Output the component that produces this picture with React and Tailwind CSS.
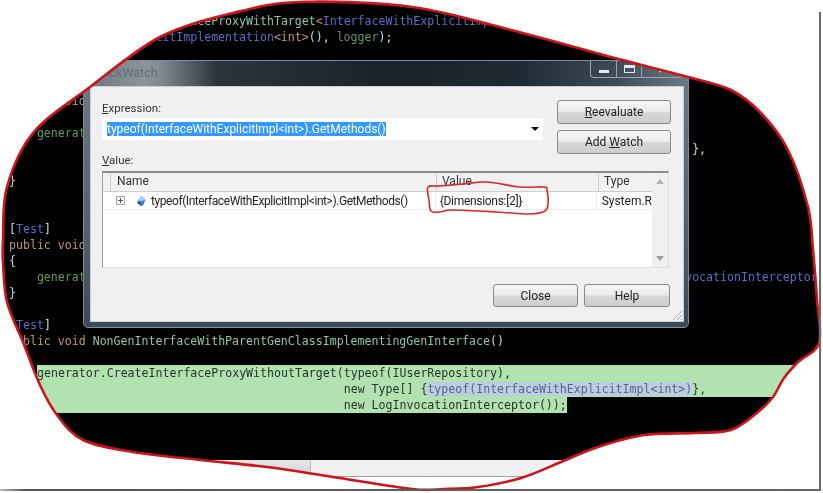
import React from "react";

const blob = [[300,2],[412,7],[511,30],[611,57],[688,77],[731,90],[761,113],[788,150],[808,207],[813,250],[817,300],[819,343],[798,362],[784,378],[773,397],[758,412],[731,430],[694,433],[644,435],[598,447],[561,462],[521,478],[478,487],[444,489],[412,489],[333,477],[267,467],[200,460],[133,452],[83,440],[57,415],[40,385],[23,342],[7,302],[3,262],[3,240],[7,187],[33,133],[90,87],[160,37],[233,13]];
const scribble = [[428,187],[440,186],[463,184],[487,182],[520,187],[544,187],[547,190],[548,204],[545,211],[530,214],[497,212],[453,210],[440,212],[431,211],[429,200]];

function smooth(p) {
  const n = p.length;
  let d = `M${p[0][0]} ${p[0][1]}`;
  for (let i = 0; i < n; i++) {
    const a = p[(i - 1 + n) % n], b = p[i], c = p[(i + 1) % n], e = p[(i + 2) % n];
    d += `C${(b[0] + (c[0] - a[0]) / 6).toFixed(1)} ${(b[1] + (c[1] - a[1]) / 6).toFixed(1)} ${(c[0] - (e[0] - b[0]) / 6).toFixed(1)} ${(c[1] - (e[1] - b[1]) / 6).toFixed(1)} ${c[0]} ${c[1]}`;
  }
  return d + "Z";
}

const sp = (n) => " ".repeat(n);
const W = "text-[#d8d8d8]";
const T = "text-[#8cc7ad]";
const B = "text-[#6469c4]";
const K = "text-[#b99a7c]";
const G = "text-[#5f9a62]";

function L({ children }) {
  return <div className="h-4 whitespace-pre">{children || " "}</div>;
}

function Editor() {
  return (
    <div className="h-[460px] overflow-hidden bg-black pt-[13px] pl-[9px] text-[11.58px] leading-4 [font-family:'DejaVu_Sans_Mono',monospace]">
      <L><span className={G}>{sp(4)}generator.</span><span className={T}>CreateInterfaceProxyWithTarget</span><span className={K}>&lt;</span><span className={B}>InterfaceWithExplicitImpl</span><span className={K}>&lt;int&gt;&gt;</span><span className={W}>(</span></L>
      <L><span className={B}>{sp(16)}ExplicitImplementation</span><span className={K}>&lt;int&gt;</span><span className={W}>(), </span><span className={G}>logger</span><span className={W}>);</span></L>
      <L /><L /><L />
      <L><span className={K}>public void</span></L>
      <L><span className={W}>{"{"}</span></L>
      <L><span className={G}>{sp(4)}generator</span></L>
      <L><span className={W}>{sp(98)}{"},"}</span></L>
      <L />
      <L><span className={W}>{"}"}</span></L>
      <L /><L />
      <L><span className={W}>[</span><span className={B}>Test</span><span className={W}>]</span></L>
      <L><span className={K}>public void</span></L>
      <L><span className={W}>{"{"}</span></L>
      <L><span className={G}>{sp(4)}generator</span><span className={B}>{sp(79)}LogInvocationInterceptor</span></L>
      <L><span className={W}>{"}"}</span></L>
      <L />
      <L><span className={W}>[</span><span className={B}>Test</span><span className={W}>]</span></L>
      <L><span className={K}>public void </span><span className={T}>NonGenInterfaceWithParentGenClassImplementingGenInterface</span><span className={W}>()</span></L>
      <L />
      <div className="ml-[28px] h-4 whitespace-pre bg-[#b2e2b0] text-[#26352a]">generator.CreateInterfaceProxyWithoutTarget(typeof(IUserRepository),</div>
      <div className="ml-[28px] h-4 whitespace-pre bg-[#b2e2b0] text-[#26352a]">{sp(44)}new Type[] {"{"}<span className="bg-[#bccde0] text-[#55648c]">typeof(InterfaceWithExplicitImpl&lt;int&gt;)</span>{"},"}</div>
      <div className="ml-[28px] h-4 w-fit whitespace-pre bg-[#b2e2b0] text-[#26352a]">{sp(44)}new LogInvocationInterceptor());</div>
    </div>
  );
}

function Btn({ className, children }) {
  return (
    <div className={"flex items-center justify-center rounded-[3px] border border-[#8a8a8a] bg-[linear-gradient(180deg,#f6f6f6_0%,#ececec_45%,#d6d6d6_55%,#cdcdcd_100%)] text-[12px] text-[#222] " + className}>
      {children}
    </div>
  );
}

function TitleBar() {
  return (
    <div className="flex h-[25px] shrink-0 items-start justify-between rounded-t-[5px] bg-[linear-gradient(90deg,#6d7780_0%,#8d959b_10%,#7f888f_13%,#2c343a_22%,#1b2228_50%,#1e2a33_72%,#3c4b57_88%,#6b7a85_100%)] pl-[7px] pr-[5px]">
      <span className="pt-[3px] text-[12.5px] leading-[18px] text-[#666d72]">QuickWatch</span>
      <div className="flex h-[17px] rounded-b-[4px] border border-t-0 border-[#9aa6ae]">
        <div className="flex w-[26px] items-center justify-center border-r border-[#9aa6ae]"><div className="mt-[5px] h-[3px] w-[10px] bg-[#e4e8ea]" /></div>
        <div className="flex w-[25px] items-center justify-center border-r border-[#9aa6ae]"><div className="h-[8px] w-[11px] border border-t-[3px] border-[#e4e8ea]" /></div>
        <div className="flex w-[40px] items-center justify-center text-[11px] font-bold leading-none text-[#e8eaec]">✕</div>
      </div>
    </div>
  );
}

function ListBox() {
  return (
    <div className="mt-[3px] flex h-[97px] border-t-2 border-l border-b border-r border-t-[#8c8c8c] border-l-[#a0a0a0] border-b-[#dedede] border-r-[#dedede] bg-white">
      <div className="flex min-w-0 flex-1 flex-col">
        <div className="flex h-[19px] border-b border-[#cfcfcf] bg-[#f1f1f1] text-[12px] leading-[17px] text-[#333]">
          <div className="w-[8px] border-r border-[#d0d0d0]" />
          <div className="w-[326px] border-r border-[#d0d0d0] pl-[6px]">Name</div>
          <div className="w-[162px] border-r border-[#d0d0d0] pl-[5px]">Value</div>
          <div className="flex-1 pl-[5px]">Type</div>
        </div>
        <div className="flex h-[18px] items-center border-b border-[#ececec] text-[12px] text-[#222]">
          <div className="flex w-[335px] items-center border-r border-[#ececec] pl-[13px]">
            <svg width="9" height="9" viewBox="0 0 9 9" className="shrink-0"><rect x="0.5" y="0.5" width="8" height="8" fill="#f4f4f4" stroke="#a8a8a8" /><path d="M2 4.5H7M4.5 2V7" stroke="#555" /></svg>
            <svg width="12" height="12" viewBox="0 0 12 12" className="ml-[10px] shrink-0"><path d="M6 1L10.5 4.5L8 10.5L6 11L2 7.5Z" fill="#3f78c8" /><path d="M6 1L10.5 4.5L6 6.5L3 5Z" fill="#a9cdf0" /><path d="M2 7.5L6 11L5 7Z" fill="#1f4f96" /></svg>
            <span className="ml-[4px] whitespace-nowrap tracking-[-0.43px]">typeof(InterfaceWithExplicitImpl&lt;int&gt;).GetMethods()</span>
          </div>
          <div className="w-[162px] border-r border-[#ececec] pl-[4px] tracking-[-0.3px]">{"{Dimensions:[2]}"}</div>
          <div className="flex-1 whitespace-nowrap pl-[5px]">System.R</div>
        </div>
      </div>
      <div className="flex w-[16px] shrink-0 flex-col items-center justify-between bg-[#f0f0f0] pt-[6px] pb-[6px]">
        <svg width="8" height="5" viewBox="0 0 8 5"><path d="M4 0L8 5H0Z" fill="#b0b0b0" /></svg>
        <svg width="8" height="5" viewBox="0 0 8 5"><path d="M4 5L8 0H0Z" fill="#9a9a9a" /></svg>
      </div>
    </div>
  );
}

function Dialog() {
  return (
    <div className="absolute left-[83px] top-[60px] flex h-[268px] w-[606px] flex-col rounded-[5px] border border-[#7f8d98] bg-[linear-gradient(180deg,#6f7b85_0%,#55626d_60%,#3b4a58_100%)]">
      <TitleBar />
      <div className="relative mb-[5px] ml-[6px] mr-[4px] flex flex-1 flex-col border border-[#c8d0d6] bg-[#f0f0f0] pt-[13px] pl-[11px] pr-[14px] text-[11.5px] leading-4 text-[#333]">
        <div className="flex justify-between">
          <div className="flex w-[441px] flex-col">
            <div className="h-4"><span className="underline">E</span>xpression:</div>
            <div className="mt-[2px] flex h-[22px] items-center justify-between bg-white pl-[5px] pr-[4px] text-[12px]">
              <span className="whitespace-nowrap bg-[#3399ff] leading-[14px] text-white">typeof(InterfaceWithExplicitImpl&lt;int&gt;).GetMethods()</span>
              <svg width="8" height="4" viewBox="0 0 8 4"><path d="M0 0H8L4 4Z" fill="#111" /></svg>
            </div>
            <div className="mt-[12px] h-4"><span className="underline">V</span>alue:</div>
          </div>
          <div className="mr-[-2px] flex w-[114px] flex-col gap-[6px]">
            <Btn className="h-[24px]"><span><span className="underline">R</span>eevaluate</span></Btn>
            <Btn className="h-[24px]"><span>Add <span className="underline">W</span>atch</span></Btn>
          </div>
        </div>
        <ListBox />
        <div className="mr-[-1px] mt-[16px] flex justify-end gap-[6px]">
          <Btn className="h-[23px] w-[85px]">Close</Btn>
          <Btn className="h-[23px] w-[86px]">Help</Btn>
        </div>
        <svg width="12" height="12" viewBox="0 0 12 12" className="absolute bottom-0 right-0"><path d="M11 2L2 11M11 6L6 11M11 10L10 11" stroke="#a8b0b6" /></svg>
      </div>
    </div>
  );
}

export default function App() {
  const outer = "M0 0H823V493H0Z";
  return (
    <div className="relative h-[493px] w-[823px] overflow-hidden bg-white blur-[0.35px] [font-family:'Roboto',sans-serif]">
      <Editor />
      <div className="flex h-[16px]">
        <div className="w-[311px] border-r border-[#b8b8b8] bg-[linear-gradient(180deg,#e6e6e6,#d2d2d2)]" />
        <div className="flex-1 bg-[#f0f0f0]" />
      </div>
      <div className="h-px bg-[#a0a0a0]" />
      <Dialog />
      <svg width="823" height="493" viewBox="0 0 823 493" className="absolute left-0 top-0">
        <path d={outer + smooth(blob)} fill="#fff" fillRule="evenodd" />
        <path d={smooth(blob)} fill="none" stroke="#cc141a" strokeWidth="2.6" />
        <path d={smooth(scribble)} fill="none" stroke="#d62a2e" strokeWidth="1.6" />
      </svg>
      <div className="absolute bottom-[3px] right-[2px] top-[12px] w-[2px] bg-[#6a6a6a]" />
      <div className="absolute bottom-[2px] left-0 right-[2px] h-[2px] bg-[linear-gradient(90deg,#bbbbbb,#555555_3%,#666666)]" />
    </div>
  );
}
